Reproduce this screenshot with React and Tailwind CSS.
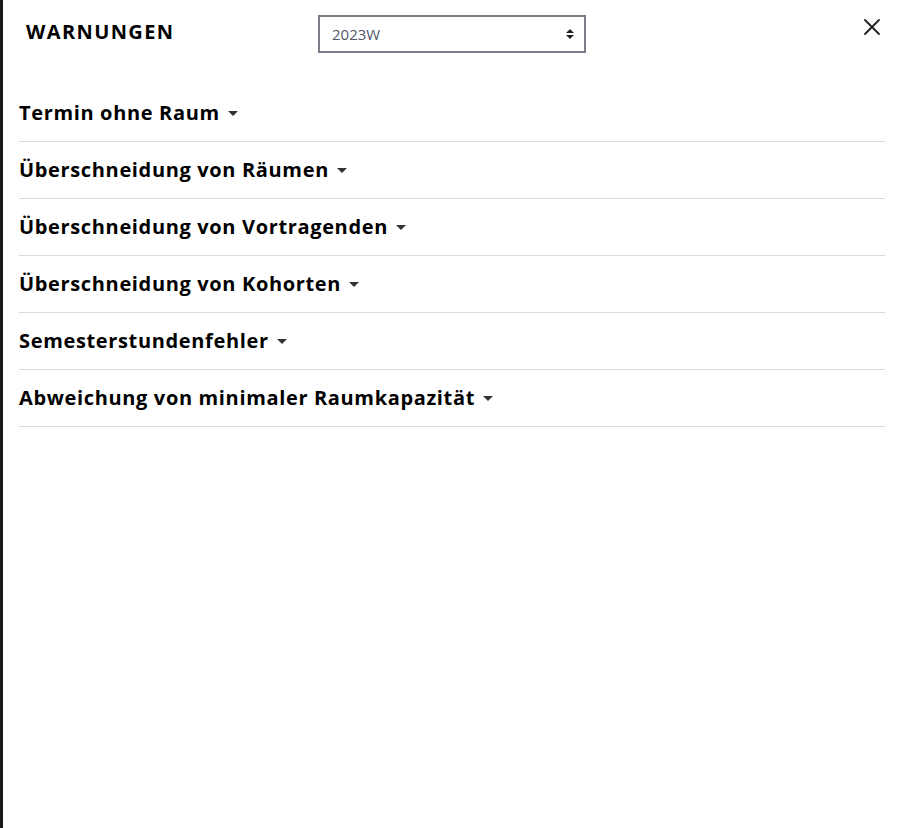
import { X } from "lucide-react";

const sections = [
  "Termin ohne Raum",
  "Überschneidung von Räumen",
  "Überschneidung von Vortragenden",
  "Überschneidung von Kohorten",
  "Semesterstundenfehler",
  "Abweichung von minimaler Raumkapazität",
];

function Caret() {
  return (
    <svg width="10" height="5" viewBox="0 0 10 5" className="ml-[8px] mt-[2px]">
      <path d="M0 0h10L5 5z" fill="#333" />
    </svg>
  );
}

export default function App() {
  return (
    <div className="min-h-[828px] w-[898px] border-l-[3px] border-[#1a1a1a] bg-white font-['Open_Sans',sans-serif] text-black">
      <div className="pl-[16px] pr-[13px]">
        <div className="flex h-[85px] items-start">
          <h1 className="mt-[17px] w-[299px] pl-[7px] text-[20px] font-bold tracking-[1.4px]">WARNUNGEN</h1>
          <div className="mt-[15px] flex h-[38px] w-[268px] items-center justify-between border-2 border-[#7b7f8a] pl-[12px] pr-[10px] text-[15px] text-[#4f5868]">
            <span>2023W</span>
            <svg width="8" height="12" viewBox="0 0 8 12">
              <path d="M0 5L4 1L8 5z M0 7L4 11L8 7z" fill="#222" />
            </svg>
          </div>
          <button className="ml-auto mr-[-1px] mt-[13px] text-[#222]">
            <X size={28} strokeWidth={1.6} />
          </button>
        </div>
        {sections.map((s) => (
          <div key={s} className="flex h-[57px] items-center border-b border-[#d9d9de] pb-[1px]">
            <span className="text-[20px] font-bold tracking-[0.65px]">{s}</span>
            <Caret />
          </div>
        ))}
      </div>
    </div>
  );
}
